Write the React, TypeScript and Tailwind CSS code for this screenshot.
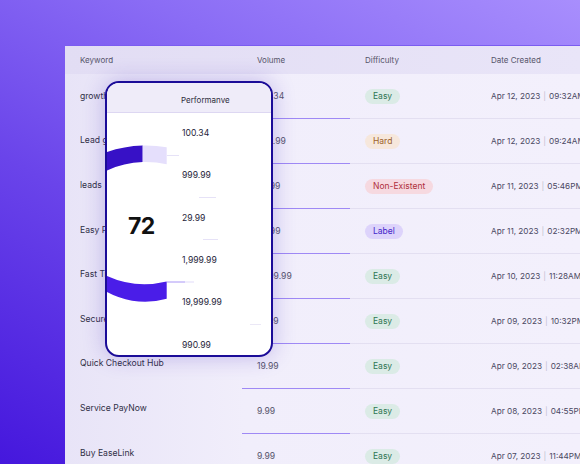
import React from "react";

const keywords = [
  "growth hacking",
  "Lead generation",
  "leads",
  "Easy Pay Plus",
  "Fast Transfer",
  "Secure Checkout",
  "Quick Checkout Hub",
  "Service PayNow",
  "Buy EaseLink",
];

type Row = { volume: string; level: string; date: string; time: string };

const rows: Row[] = [
  { volume: "100.34", level: "Easy", date: "Apr 12, 2023", time: "09:32AM" },
  { volume: "999.99", level: "Hard", date: "Apr 12, 2023", time: "09:24AM" },
  { volume: "29.99", level: "Non-Existent", date: "Apr 11, 2023", time: "05:46PM" },
  { volume: "99.99", level: "Label", date: "Apr 11, 2023", time: "02:32PM" },
  { volume: "1,999.99", level: "Easy", date: "Apr 10, 2023", time: "11:28AM" },
  { volume: "19.99", level: "Easy", date: "Apr 09, 2023", time: "10:32PM" },
  { volume: "19.99", level: "Easy", date: "Apr 09, 2023", time: "02:38AM" },
  { volume: "9.99", level: "Easy", date: "Apr 08, 2023", time: "04:55PM" },
  { volume: "9.99", level: "Easy", date: "Apr 07, 2023", time: "11:44PM" },
];

const cardValues = ["100.34", "999.99", "29.99", "1,999.99", "19,999.99", "990.99"];

function Badge({ level }: { level: string }) {
  const styles: Record<string, string> = {
    Easy: "bg-[#dbebe6] text-[#2e7552]",
    Hard: "bg-[#f6e7dc] text-[#9c5f2a]",
    "Non-Existent": "bg-[#f6d9e0] text-[#b0303c]",
    Label: "bg-[#ddd3fb] text-[#4425c9]",
  };
  return (
    <span className={"inline-flex h-[15px] items-center rounded-full px-[8px] text-[8.5px] leading-none " + styles[level]}>
      {level}
    </span>
  );
}

function Gauge() {
  return (
    <svg
      width="74"
      height="242"
      viewBox="107 113 74 242"
      className="overflow-visible"
    >
      <path
        d="M100,154.7 A120,120 0 0 1 142.7,145.55 L142.7,162.06 A94,94 0 0 0 100,174 Z"
        fill="#3711c6"
      />
      <path
        d="M142.7,145.55 A120,120 0 0 1 166.7,147.3 L166.7,164.3 A94,94 0 0 0 142.7,162.06 Z"
        fill="#e5dffc"
      />
      <path
        d="M100,272.4 A93.4,93.4 0 0 0 166.7,281.45 L166.7,298.7 A80,80 0 0 1 100,287.8 Z"
        fill="#4a1de8"
      />
      <line x1="167" y1="155.5" x2="179" y2="155.5" stroke="#e6e2f7" strokeWidth="1" />
      <line x1="199" y1="197.5" x2="216" y2="197.5" stroke="#e6e2f7" strokeWidth="1" />
      <line x1="203" y1="239.5" x2="218" y2="239.5" stroke="#e6e2f7" strokeWidth="1" />
      <line x1="167" y1="282" x2="185" y2="282" stroke="#a996f6" strokeWidth="1" />
      <line x1="185" y1="282" x2="194" y2="282" stroke="#e1dbfa" strokeWidth="1" />
      <line x1="250" y1="324.5" x2="261" y2="324.5" stroke="#ebe8f6" strokeWidth="1" />
    </svg>
  );
}

export default function App() {
  return (
    <div
      className="relative h-[464px] w-[580px] overflow-hidden bg-[linear-gradient(28deg,#4517dd_0%,#6a44ea_40%,#8a6cf5_70%,#a88efd_100%)] pl-[65px] pt-[46px]"
      style={{ fontFamily: "Inter, 'Noto Sans', sans-serif" }}
    >
      <div className="h-full w-full bg-[linear-gradient(90deg,#e8e4f7_0%,#f1eefb_35%,#f3f0fc_100%)] shadow-[0_-1px_0_#7b5cf0]">
        {/* header */}
        <div className="flex h-[28px] items-center bg-[linear-gradient(90deg,#e2ddf4,#e9e5f8)] text-[8px] text-[#56546a]">
          <div className="w-[177px] pl-[15px]">Keyword</div>
          <div className="w-[108px] pl-[15px]">Volume</div>
          <div className="w-[126px] pl-[15px]">Difficulty</div>
          <div className="pl-[15px]">Date Created</div>
        </div>

        <div className="flex">
          {/* keyword column */}
          <div className="w-[177px] shrink-0">
            {keywords.map((k) => (
              <div key={k} className="flex h-[44.6px] items-center pl-[15px] text-[8.6px] text-[#302f45]">
                {k}
              </div>
            ))}
          </div>

          {/* other columns */}
          <div className="flex-1">
            {rows.map((r, i) => (
              <div key={i} className="flex h-[45px]">
                <div className="flex w-[108px] items-center border-b border-[#9f89f5] pl-[15px] text-[8.6px] text-[#57556c]">
                  {r.volume}
                </div>
                <div className="flex w-[126px] items-center border-b border-[#e3dff1] pl-[15px]">
                  <Badge level={r.level} />
                </div>
                <div className="flex flex-1 items-center whitespace-nowrap border-b border-[#e3dff1] pl-[15px] text-[8.2px] text-[#4a4862]">
                  {r.date}
                  <span className="mx-[3px] text-[#c2bfd0]">|</span>
                  {r.time}
                </div>
              </div>
            ))}
          </div>
        </div>
      </div>

      {/* floating performance card */}
      <div className="absolute left-[105px] top-[81px] flex h-[276px] w-[168px] flex-col overflow-hidden rounded-[14px] border-2 border-[#1b0c98] bg-white shadow-[0_0_22px_rgba(70,40,190,0.28)]">
        <div className="flex h-[30px] shrink-0 border-b border-[#ddd7f2] bg-[#efecf9] pl-[74px] pt-[11px] text-[8px] leading-[12px] text-[#2e2d3c]">
          Performanve
        </div>
        <div className="flex flex-1">
          <div className="relative w-[74px] shrink-0">
            <Gauge />
            <div className="absolute left-[21px] top-[101px] text-[23px] font-bold leading-[24px] tracking-tight text-[#111]">
              72
            </div>
          </div>
          <div className="flex-1 -mt-[1px] pl-[1px]">
            {cardValues.map((v) => (
              <div key={v} className="flex h-[42.4px] items-center text-[8.6px] text-[#26253a]">
                {v}
              </div>
            ))}
          </div>
        </div>
      </div>
    </div>
  );
}
